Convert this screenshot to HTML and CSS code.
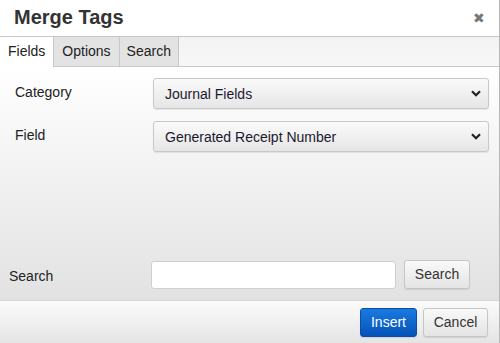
FILE: index.html
```html
<!DOCTYPE html>
<html>
<head>
<meta charset="utf-8">
<link rel="stylesheet" href="styles.css">
</head>
<body>
<div class="dialog">
  <div class="header">
    <h1 class="title">Merge Tags</h1>
    <span class="close">✖</span>
  </div>
  <div class="tabs">
    <div class="tab active">Fields</div>
    <div class="tab">Options</div>
    <div class="tab">Search</div>
  </div>
  <div class="body">
    <div class="row">
      <label class="label">Category</label>
      <div class="select">Journal Fields<svg class="chev" viewBox="0 0 10 7" width="10" height="7"><path d="M1 1.2 L5 5.2 L9 1.2" fill="none" stroke="#222" stroke-width="2.2"/></svg></div>
    </div>
    <div class="row">
      <label class="label">Field</label>
      <div class="select">Generated Receipt Number<svg class="chev" viewBox="0 0 10 7" width="10" height="7"><path d="M1 1.2 L5 5.2 L9 1.2" fill="none" stroke="#222" stroke-width="2.2"/></svg></div>
    </div>
    <div class="spacer"></div>
    <div class="search-row">
      <label class="label slabel">Search</label>
      <div class="input"></div>
      <div class="btn">Search</div>
    </div>
  </div>
  <div class="footer">
    <div class="btn primary">Insert</div>
    <div class="btn cancel">Cancel</div>
  </div>
</div>
</body>
</html>
```

FILE: styles.css
```css
* { box-sizing: border-box; }
html, body { margin: 0; padding: 0; }
body {
  width: 500px;
  height: 343px;
  font-family: "Liberation Sans", Arial, sans-serif;
  background: #fff;
  overflow: hidden;
}
.dialog {
  width: 500px;
  height: 343px;
  display: flex;
  flex-direction: column;
  border-right: 1px solid #b8b8b8;
}
.header {
  height: 37px;
  display: flex;
  align-items: center;
  justify-content: space-between;
  padding: 0 14px 0 14px;
  border-bottom: 1px solid #c6c6c6;
  background: #fff;
}
.title {
  margin: 0;
  font-size: 20px;
  font-weight: bold;
  color: #333;
  position: relative;
  top: -1px;
}
.close {
  font-size: 14px;
  color: #777;
  margin-right: 0;
}
.tabs {
  height: 30px;
  display: flex;
  background: linear-gradient(#f3f3f3, #f7f7f7);
  border-bottom: 1px solid #c8c8c8;
}
.tab {
  font-size: 14px;
  color: #222;
  padding: 0 8px;
  line-height: 29px;
  background: #e3e3e3;
  border-right: 1px solid #c8c8c8;
  height: 29px;
}
.tab.active {
  background: #fff;
  height: 30px;
  padding: 0 8px 0 8px;
  border-right: 1px solid #c8c8c8;
}
.tab:last-child { padding: 0 7px; }
.body {
  flex: 1;
  display: flex;
  flex-direction: column;
  background: linear-gradient(#ffffff, #e2e2e2);
  padding: 11px 10px 0 9px;
}
.row {
  display: flex;
  align-items: center;
  margin-bottom: 12px;
}
.label {
  font-size: 14px;
  color: #222;
  width: 144px;
  padding-left: 6px;
  position: relative;
  top: -2px;
}
.select {
  flex: 1;
  height: 31px;
  border: 1px solid #c8c8c8;
  border-radius: 3px;
  background: linear-gradient(#fafafa, #e6e6e6);
  box-shadow: 0 1px 1px rgba(0,0,0,0.08);
  display: flex;
  align-items: center;
  justify-content: space-between;
  padding: 0 6px 0 11px;
  font-size: 14px;
  color: #1a1a2e;
}
.chev { margin-right: 1px; }
.spacer { flex: 1; }
.search-row {
  display: flex;
  align-items: center;
  margin-bottom: 11px;
  padding-left: 0;
}
.slabel {
  width: 142px;
  padding-left: 0;
  top: 1px;
}
.input {
  width: 245px;
  height: 28px;
  background: #fff;
  border: 1px solid #cfcfcf;
  border-radius: 3px;
}
.btn {
  font-size: 14px;
  color: #333;
  height: 29px;
  line-height: 27px;
  padding: 0 10px;
  border: 1px solid #c6c6c6;
  border-radius: 3px;
  background: linear-gradient(#f9f9f9, #e4e4e4);
  box-shadow: 0 1px 1px rgba(0,0,0,0.1);
}
.search-row .btn {
  margin-left: 8px;
  width: 66px;
  text-align: center;
  padding: 0;
}
.footer {
  height: 43px;
  display: flex;
  justify-content: flex-end;
  align-items: center;
  gap: 6px;
  padding: 0 11px 0 0;
  background: linear-gradient(#fbfbfb, #e4e4e4);
  border-top: 1px solid #d6d6d6;
}
.btn.primary {
  background: linear-gradient(#1a7ae0, #0553b8);
  border-color: #0a4fa5;
  color: #fff;
  width: 57px;
  text-align: center;
  padding: 0;
}
.btn.cancel {
  width: 65px;
  text-align: center;
  padding: 0;
}
```
